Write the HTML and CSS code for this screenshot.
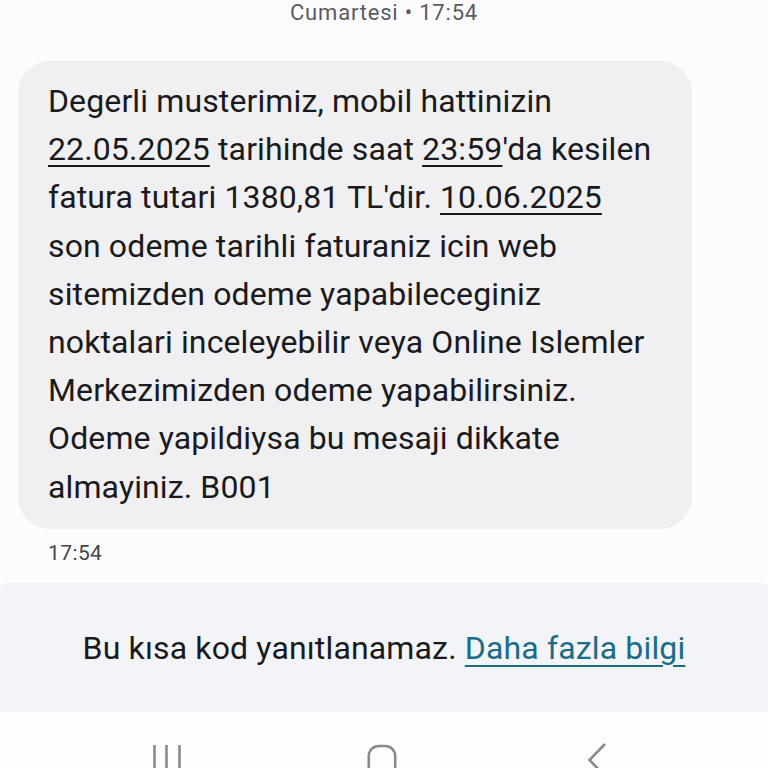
FILE: index.html
```html
<!DOCTYPE html>
<html lang="tr">
<head>
<meta charset="utf-8">
<link rel="stylesheet" href="styles.css">
</head>
<body>
<div class="screen">
  <div class="date">Cumartesi • 17:54</div>
  <div class="thread">
    <div class="bubble">Degerli musterimiz, mobil hattinizin<br><u>22.05.2025</u> tarihinde saat <u>23:59</u>'da kesilen<br>fatura tutari 1380,81 TL'dir. <u>10.06.2025</u><br>son odeme tarihli faturaniz icin web<br>sitemizden odeme yapabileceginiz<br>noktalari inceleyebilir veya Online Islemler<br>Merkezimizden odeme yapabilirsiniz.<br>Odeme yapildiysa bu mesaji dikkate<br>almayiniz. B001</div>
    <div class="time">17:54</div>
  </div>
  <div class="notice">Bu kısa kod yanıtlanamaz. <a class="link" href="#">Daha fazla bilgi</a></div>
  <div class="navbar">
    <svg class="nav-icon" width="40" height="30" viewBox="0 0 40 30"><path d="M7.5 7V32M19.5 7V32M32.5 7V32" stroke="#8a8a8a" stroke-width="2.6" fill="none"/></svg>
    <svg class="nav-icon" width="40" height="30" viewBox="0 0 40 30"><path d="M6.8 32V18A10 10 0 0 1 16.8 8H23.2A10 10 0 0 1 33.2 18V32" stroke="#8a8a8a" stroke-width="2.6" fill="none"/></svg>
    <svg class="nav-icon" width="40" height="30" viewBox="0 0 40 30"><path d="M28 6L12.5 22L28 38" stroke="#8a8a8a" stroke-width="2.6" fill="none"/></svg>
  </div>
</div>
</body>
</html>
```
FILE: styles.css
```css
html, body {
  margin: 0;
  padding: 0;
  background: #fcfcfe;
}
.screen {
  width: 768px;
  height: 768px;
  overflow: hidden;
  display: flex;
  flex-direction: column;
  font-family: Roboto, "Noto Sans", sans-serif;
}
.date {
  height: 26px;
  text-align: center;
  font-size: 22px;
  letter-spacing: 0.8px;
  line-height: 26px;
  color: #5b5b5f;
}
.thread {
  padding: 35px 0 0 18px;
  height: 557px;
  box-sizing: border-box;
}
.bubble {
  width: 674px;
  box-sizing: border-box;
  background: #f0f0f2;
  border-radius: 32px;
  padding: 16px 0 18px 30px;
  font-size: 32px;
  letter-spacing: 0.12px;
  line-height: 48.2px;
  color: #1a1a1c;
  white-space: nowrap;
}
.bubble u {
  text-decoration-thickness: 2px;
  text-underline-offset: 5px;
}
.time {
  margin: 11px 0 0 30px;
  font-size: 21px;
  letter-spacing: 0.4px;
  line-height: 26px;
  color: #444448;
}
.notice {
  height: 129px;
  background: #f2f4f7;
  display: flex;
  align-items: center;
  justify-content: center;
  font-size: 32px;
  letter-spacing: 0.15px;
  color: #1a1a1c;
  border-radius: 6px 6px 0 0;
  white-space: pre;
}
.link {
  color: #1b6d86;
  text-decoration: underline;
  text-decoration-thickness: 2px;
  text-underline-offset: 6px;
}
.navbar {
  flex: 1;
  background: #fdfdfe;
  display: flex;
  align-items: flex-end;
  justify-content: flex-start;
  padding-left: 146.5px;
  gap: 175px;
}
.nav-icon {
  display: block;
}
```
